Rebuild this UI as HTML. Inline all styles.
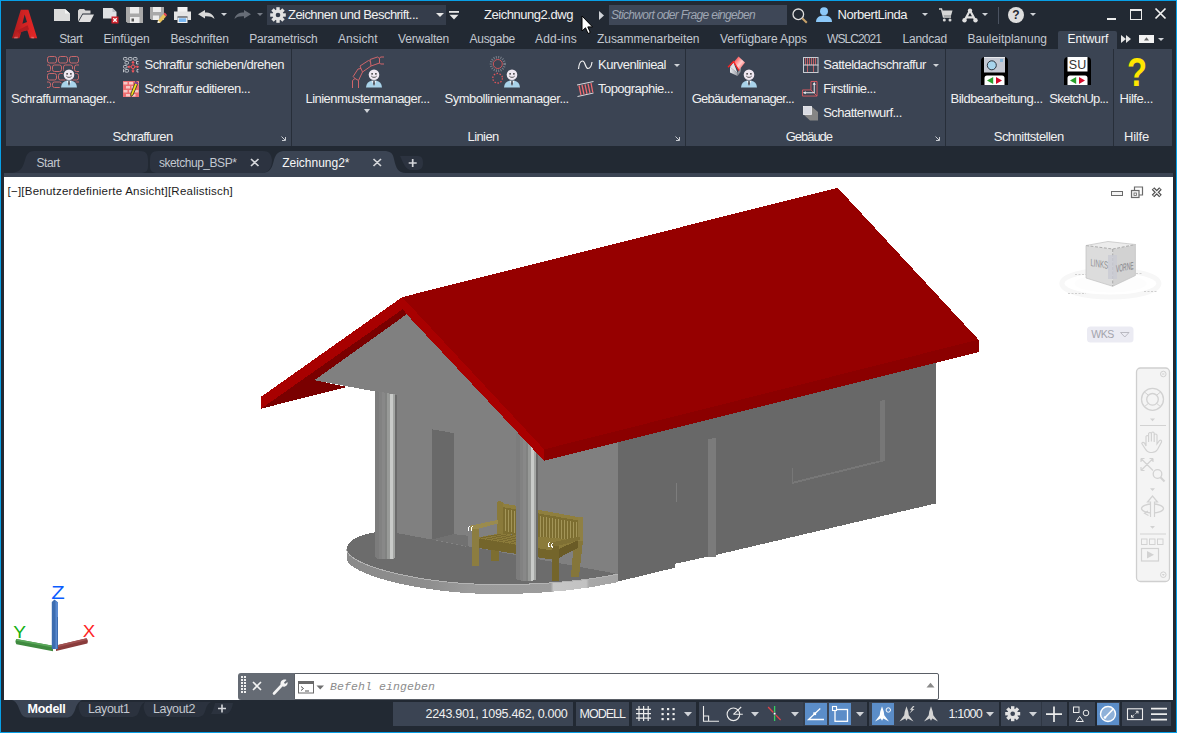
<!DOCTYPE html>
<html lang="de"><head><meta charset="utf-8">
<title>Zeichnung2.dwg</title>
<style>
*{box-sizing:border-box;margin:0;padding:0}
html,body{width:1177px;height:733px;overflow:hidden;background:#222933}
body{position:relative;font-family:"Liberation Sans","DejaVu Sans",sans-serif;color:#f0f0f0;font-size:12.5px}
.a{position:absolute}
svg{position:absolute;overflow:visible}
#frame{position:absolute;left:0;top:0;width:1177px;height:733px;border:1px solid #089fe6;z-index:50}
.t{position:absolute;white-space:nowrap;line-height:normal;z-index:20}
.box{position:absolute;background:#3b4453}
.sep{position:absolute;top:49px;width:1px;height:97px;background:#272e39}
#draw{position:absolute;left:4px;top:177px;width:1169px;height:523px;background:#fff}
.dd{position:absolute;width:0;height:0;border-left:3.5px solid transparent;border-right:3.5px solid transparent;border-top:4px solid #d0d3d8}
.sb{position:absolute;top:702px;height:24px;background:#3b4453}
.sbb{position:absolute;top:703px;height:22px;background:#5b8dc8}
</style></head><body>
<div id="frame"></div>
<!-- ================= TITLE BAR ================= -->
<div id="titlebar">
<!-- A logo -->
<svg style="left:0;top:0" width="50" height="45" viewBox="0 0 50 45">
 <defs><linearGradient id="ag" x1="0" y1="0" x2="1" y2="0"><stop offset="0" stop-color="#a91c1e"/><stop offset=".45" stop-color="#cf2222"/><stop offset="1" stop-color="#e62626"/></linearGradient>
 <linearGradient id="ag2" x1="0" y1="0" x2="0" y2="1"><stop offset="0" stop-color="#c82222" stop-opacity="0"/><stop offset=".75" stop-color="#d84040" stop-opacity=".2"/><stop offset="1" stop-color="#f59a9a" stop-opacity=".95"/></linearGradient></defs>
 <path d="M20.800 9.700H28.400L37.200 38.200H29.800L27.300 30.200L21.300 31.800L19.400 38.200H12ZM24.600 14.400L22.400 23.700L27 22Z" fill="url(#ag)" fill-rule="evenodd"/>
 <path d="M16.500 31L27.600 25.200L29 29.600L21.300 31.800L20.500 34.500Z" fill="#b01c20"/>
 <path d="M14 38.200L16.500 30L19.500 31L17.500 38.200Z" fill="url(#ag2)"/>
 <path d="M31.500 38.200L29 30.500L31.500 30L34.200 38.200Z" fill="url(#ag2)"/>
</svg>
<!-- new -->
<svg style="left:54px;top:9px" width="16" height="12" viewBox="0 0 16 12"><path d="M0 0H11L16 4.5V12H0Z" fill="#dcdcdc"/><path d="M11 0V4.5H16Z" fill="#f4f4f4"/></svg>
<!-- open -->
<svg style="left:78px;top:9px" width="16" height="13" viewBox="0 0 16 13"><path d="M0 12.5V1.5L1.5 0H6L7.5 1.5H12.5V4.5H4.5Z" fill="#d6d6d6"/><path d="M4.8 5.5H16L12.2 13H0.6Z" fill="#e0e0e0"/></svg>
<!-- doc with x -->
<svg style="left:102px;top:7px" width="17" height="17" viewBox="0 0 17 17"><path d="M1 1H10.5L14.5 5V11.5H1Z" fill="#dfe1e4"/><path d="M10.5 1V5H14.5Z" fill="#b9bdc4"/><rect x="9.5" y="9.5" width="7" height="7" fill="#d0202a"/><path d="M11.3 11.3L14.7 14.7M14.7 11.3L11.3 14.7" stroke="#fff" stroke-width="1.3"/></svg>
<!-- save -->
<svg style="left:126px;top:7px" width="17" height="16" viewBox="0 0 17 16"><path d="M0 0H17V16H1.5L0 14.5Z" fill="#a9a9a9"/><rect x="4" y="0" width="9" height="6.5" fill="#ececec"/><rect x="4" y="10" width="9.5" height="6" fill="#ececec"/><rect x="5.5" y="11.5" width="2.5" height="3" fill="#555"/></svg>
<!-- save as -->
<svg style="left:150px;top:7px" width="17" height="16" viewBox="0 0 17 16"><path d="M0 0H14V13H1.5L0 11.500Z" fill="#a9a9a9"/><rect x="3" y="0" width="8" height="5" fill="#ececec"/><rect x="3" y="8.5" width="6" height="4.500" fill="#ececec"/><path d="M8 13.5L13.500 7L16 9.500L10.500 15.500L7.500 16Z" fill="#e9c35a"/><path d="M13.500 7L14.800 5.600L17 8L16 9.500Z" fill="#ee4b55"/><path d="M7.500 16L8 13.500L10.500 15.500Z" fill="#f5f5f5"/></svg>
<!-- print -->
<svg style="left:174px;top:7px" width="17" height="16" viewBox="0 0 17 16"><rect x="3.5" y="0" width="10" height="5" fill="#f2f2f2"/><path d="M0 4.500H17V13H13.500V9.500H3.500V13H0Z" fill="#e4e4e4"/><rect x="3.500" y="10.500" width="10" height="5.500" fill="#f2f2f2"/><rect x="4.800" y="11.300" width="7.400" height="3.700" fill="#79b7f2"/></svg>
<!-- undo -->
<svg style="left:198px;top:10px" width="17" height="9" viewBox="0 0 17 9"><path d="M0 4.200L7 0V2.600C12 2.600 15.500 4.500 16.500 9C14.200 6.600 11.500 6 7 6.200V8.600Z" fill="#d9d9d9"/></svg>
<div class="dd" style="left:221px;top:13px;border-left-width:3px;border-right-width:3px;border-top-width:3.5px"></div>
<!-- redo -->
<svg style="left:233.500px;top:10px" width="17" height="9" viewBox="0 0 17 9"><path d="M17 4.200L10 0V2.600C5 2.600 1.500 4.500 0.500 9C2.800 6.600 5.500 6 10 6.200V8.600Z" fill="#666c76"/></svg>
<div class="dd" style="left:257px;top:13px;border-left-width:3px;border-right-width:3px;border-top-width:3.5px;border-top-color:#767c86"></div>
<!-- workspace box -->
<div class="a" style="left:267px;top:5px;width:179px;height:20px;background:#353d4b"></div>
<svg style="left:270px;top:7px" width="16" height="16" viewBox="-8 -8 16 16"><g fill="#e2e2e2"><circle r="5.400"/><g id="gt"><rect x="-1.700" y="-7.800" width="3.400" height="15.600"/></g><use href="#gt" transform="rotate(45)"/><use href="#gt" transform="rotate(90)"/><use href="#gt" transform="rotate(135)"/></g><circle r="2.300" fill="#353d4b"/></svg>
<div class="dd" style="left:436px;top:12.500px;border-left-width:4px;border-right-width:4px;border-top-width:4.500px;border-top-color:#e6e6e6"></div>
<!-- customize qat -->
<svg style="left:449px;top:10.500px" width="10" height="9" viewBox="0 0 10 9"><rect x="0" y="0" width="10" height="1.800" fill="#e6e6e6"/><path d="M0.500 3.800H9.500L5 8.500Z" fill="#e6e6e6"/></svg>
<!-- mouse cursor -->
<svg style="left:580.500px;top:14.500px;z-index:30" width="13" height="20" viewBox="0 0 13 20"><path d="M1 1V16L4.500 12.800L7 18.500L9.300 17.500L6.800 11.900H11.500Z" fill="#fff" stroke="#000" stroke-width="1"/></svg>
<!-- small triangle -->
<svg style="left:598.500px;top:10.500px" width="5" height="9" viewBox="0 0 5 9"><path d="M0 0L5 4.500L0 9Z" fill="#d0d3d8"/></svg>
<!-- search box -->
<div class="a" style="left:609px;top:5px;width:178px;height:20px;background:#3e4757"></div>
<svg style="left:792px;top:7.500px" width="16" height="16" viewBox="0 0 16 16"><circle cx="6.300" cy="6.300" r="5.300" fill="none" stroke="#e0e0e0" stroke-width="1.300"/><path d="M10.200 10.200L14.800 14.800" stroke="#c9a26a" stroke-width="2"/></svg>
<!-- user -->
<svg style="left:816px;top:7px" width="16" height="15" viewBox="0 0 16 15"><circle cx="8" cy="4.200" r="4" fill="#8cc8f8"/><path d="M0 15C0 10.500 3.500 8.500 8 8.500S16 10.500 16 15Z" fill="#8cc8f8"/></svg>
<div class="dd" style="left:921.500px;top:13px;border-left-width:3px;border-right-width:3px;border-top-width:3.500px"></div>
<!-- cart -->
<svg style="left:939px;top:8px" width="14" height="14" viewBox="0 0 14 14"><path d="M0 1H2.500L4.500 9H12" fill="none" stroke="#d6d6d6" stroke-width="1.400"/><path d="M3 2.500H13.500L12 7.800H4.300Z" fill="#d6d6d6"/><circle cx="5.300" cy="12" r="1.500" fill="#d6d6d6"/><circle cx="11" cy="12" r="1.500" fill="#d6d6d6"/></svg>
<!-- A app -->
<svg style="left:962px;top:7.500px" width="16" height="15" viewBox="0 0 16 15"><path d="M8 2.500L2.500 12.500M8 2.500L13.500 12.500M4.300 9.300H11.700" fill="none" stroke="#e0e0e0" stroke-width="2.200"/><circle cx="8" cy="2.600" r="2.200" fill="#e0e0e0"/><circle cx="2.500" cy="12.300" r="2.200" fill="#e0e0e0"/><circle cx="13.500" cy="12.300" r="2.200" fill="#e0e0e0"/></svg>
<div class="dd" style="left:982px;top:13px;border-left-width:3px;border-right-width:3px;border-top-width:3.500px"></div>
<div class="a" style="left:998px;top:7px;width:1px;height:17px;background:#4a5260"></div>
<!-- help -->
<svg style="left:1008px;top:7px" width="16" height="16" viewBox="0 0 16 16"><circle cx="8" cy="8" r="8" fill="#dedede"/><text x="8" y="12.300" font-size="12" font-weight="bold" text-anchor="middle" fill="#222933" font-family="Liberation Sans,sans-serif">?</text></svg>
<div class="dd" style="left:1030px;top:13px;border-left-width:3px;border-right-width:3px;border-top-width:3.500px"></div>
<!-- window controls -->
<div class="a" style="left:1107px;top:17.500px;width:8.500px;height:2.300px;background:#ececec"></div>
<div class="a" style="left:1130px;top:9px;width:12px;height:11px;border:1.300px solid #ececec;border-top-width:2px"></div>
<svg style="left:1155px;top:8px" width="11" height="11" viewBox="0 0 11 11"><path d="M0.500 0.500L10.500 10.500M10.500 0.500L0.500 10.500" stroke="#f2f2f2" stroke-width="1.700"/></svg>
</div>

<!-- ================= MENU ================= -->
<div id="menu">
<div class="a" style="left:1058px;top:31px;width:59px;height:19px;background:#3b4453;border-radius:2px 2px 0 0"></div>
<svg style="left:1120.500px;top:35px" width="10" height="8" viewBox="0 0 10 8"><path d="M0 0L5 4L0 8ZM5 0L10 4L5 8Z" fill="#e6e6e6"/></svg>
<div class="a" style="left:1139px;top:35px;width:15px;height:8px;background:#f2f2f2"></div>
<svg style="left:1144px;top:37px" width="5" height="4" viewBox="0 0 5 4"><path d="M0 3.500L2.500 0.300L5 3.500Z" fill="#666"/></svg>
<div class="dd" style="left:1158px;top:38px;border-left-width:3px;border-right-width:3px;border-top-width:3.500px"></div>
</div>

<!-- ================= RIBBON ================= -->
<div class="box" id="ribbon" style="left:6px;top:49px;width:1166px;height:97px"></div>
<div class="sep" style="left:291px"></div>
<div class="sep" style="left:685px"></div>
<div class="sep" style="left:945px"></div>
<div class="sep" style="left:1113px"></div>
<svg width="0" height="0" style="left:0;top:0"><defs>
 <g id="mgr">
  <path d="M0 18C0.300 14 2.500 11.800 5.500 11.300H10.500C13.500 11.800 15.700 14 16 18Z" fill="#a9d3ea"/>
  <path d="M5.600 11.200H10.400L8 16.500Z" fill="#f4f4f6"/>
  <path d="M7.300 11.500H8.700L9 14.500L8 16.500L7 14.500Z" fill="#4a4f5a"/>
  <circle cx="8" cy="5.300" r="5.300" fill="#efe8f2"/>
  <circle cx="6.100" cy="4.300" r="0.900" fill="#333"/><circle cx="9.900" cy="4.300" r="0.900" fill="#333"/>
  <path d="M5.300 6.600C6.500 8.300 9.500 8.300 10.700 6.600" fill="none" stroke="#333" stroke-width="0.800"/>
 </g>
 <path id="ca" d="M0 0H5V5ZM1 1.200L3.800 4V1.200Z" fill-rule="evenodd"/>
</defs></svg>

<!-- Schraffurmanager -->
<svg style="left:47px;top:56px" width="32" height="32" viewBox="0 0 32 32">
 <g fill="none" stroke="#c8676b" stroke-width="1">
  <rect x="0.500" y="0.500" width="9" height="6.500" rx="2"/><rect x="11.500" y="0.500" width="9" height="6.500" rx="2"/><rect x="22.500" y="0.500" width="9" height="6.500" rx="2"/>
  <path d="M0 9H1.500Q3.500 9 3.500 11V13.500Q3.500 15.500 1.500 15.500H0"/><rect x="5.500" y="9" width="9" height="6.500" rx="2"/><rect x="16.500" y="9" width="9" height="6.500" rx="2"/><path d="M32 9H29.500Q27.500 9 27.500 11V13.500Q27.500 15.500 29.500 15.500H32"/>
  <rect x="0.500" y="17.500" width="9" height="6.500" rx="2"/><rect x="11.500" y="17.500" width="9" height="6.500" rx="2"/><rect x="22.500" y="17.500" width="9" height="6.500" rx="2"/>
  <path d="M0 26H1.500Q3.500 26 3.500 28V29.500Q3.500 31.500 1.500 31.500H0"/><rect x="5.500" y="26" width="9" height="5.500" rx="2"/><path d="M32 26H29.500Q27.500 26 27.500 28"/>
 </g>
 <circle cx="22" cy="18.300" r="6.300" fill="#3b4453"/><path d="M13 32C13.500 27 16 25 19.500 24.500H24.500C28 25 30.500 27 31 32Z" fill="#3b4453"/>
 <use href="#mgr" x="14" y="13.500"/>
</svg>
<!-- schieben/drehen -->
<svg style="left:123px;top:57px" width="16" height="16" viewBox="0 0 16 16">
 <g fill="none" stroke="#c9cdd4" stroke-width="0.900">
  <rect x="0.500" y="0.500" width="3.500" height="2.600" rx="0.800"/><rect x="5.500" y="0.500" width="3.500" height="2.600" rx="0.800"/><rect x="10.500" y="0.500" width="3.500" height="2.600" rx="0.800"/>
  <rect x="2" y="4.500" width="3.500" height="2.600" rx="0.800"/><path d="M15.500 4.500H13.500V7H15.500"/>
  <rect x="0.500" y="8.500" width="3.500" height="2.600" rx="0.800"/>
  <rect x="2" y="12.500" width="3.500" height="2.600" rx="0.800"/><path d="M0 12.500H0.500V15H0M15.500 12.500H14V15H15.500"/>
 </g>
 <g stroke="#f0555a" stroke-width="1" fill="none"><path d="M10 4.500V15M5 9.800H15.500"/><circle cx="10" cy="9.800" r="1.800" fill="#3b4453"/></g>
 <g fill="#f0555a"><path d="M10 3.500L8.300 6H11.700ZM10 16L8.300 13.600H11.700ZM4.300 9.800L6.500 8.200V11.400ZM16 9.800L13.800 8.200V11.400Z"/></g>
</svg>
<!-- editieren -->
<svg style="left:123px;top:81px" width="16" height="16" viewBox="0 0 16 16">
 <rect width="16" height="16" fill="#ef6f72"/>
 <g fill="#f6c9c6"><rect x="0.500" y="1" width="4" height="2.500"/><rect x="6" y="1" width="4" height="2.500"/><rect x="11.500" y="1" width="4" height="2.500"/><rect x="3" y="5" width="4" height="2.500"/><rect x="8.500" y="5" width="4" height="2.500"/><rect x="0.500" y="9" width="4" height="2.500"/><rect x="6" y="9" width="4" height="2.500"/><rect x="11.500" y="9" width="4" height="2.500"/><rect x="3" y="13" width="4" height="2.500"/><rect x="8.500" y="13" width="4" height="2.500"/></g>
 <path d="M12.500 0.500L15 2L10 14L8 15.500L7.800 13Z" fill="#f4e11a" stroke="#2c2c2c" stroke-width="0.800"/><path d="M12.500 0.500L15 2L14.300 3.600L11.800 2.200Z" fill="#8b2bb0"/>
</svg>
<!-- corner arrows -->
<svg style="left:281px;top:135.500px" width="5" height="5" viewBox="0 0 5 5"><path d="M0.500 0.500L4 4M4.500 1V4.500H1" fill="none" stroke="#c9ccd2" stroke-width="1"/></svg>
<svg style="left:675px;top:135.500px" width="5" height="5" viewBox="0 0 5 5"><path d="M0.500 0.500L4 4M4.500 1V4.500H1" fill="none" stroke="#c9ccd2" stroke-width="1"/></svg>
<svg style="left:934.500px;top:135.500px" width="5" height="5" viewBox="0 0 5 5"><path d="M0.500 0.500L4 4M4.500 1V4.500H1" fill="none" stroke="#c9ccd2" stroke-width="1"/></svg>

<!-- Linienmustermanager -->
<svg style="left:352px;top:56px" width="32" height="32" viewBox="0 0 32 32">
 <g fill="none" stroke="#d0656a" stroke-width="1">
  <path d="M0.500 32V24.500L3 22.500L6.500 24.500V32"/>
  <path d="M3 22.500L1.200 20.500L6 13L9 12.500L10.500 16L6.500 24.500"/>
  <path d="M9 12.500L8 10L16.500 4.500L18.500 5.500L19 10L10.500 16"/>
  <path d="M18.500 5.500L18 3.500L25.500 1L27.500 2.500L27.500 7L19 10"/>
  <path d="M32 1H28.500L27.500 2.500V7L28.500 8H32"/>
 </g>
 <use href="#mgr" x="14" y="13.500"/>
</svg>
<div class="dd" style="left:364px;top:108.500px;border-left-width:3.500px;border-right-width:3.500px;border-top-width:4px"></div>
<!-- Symbollinienmanager -->
<svg style="left:490px;top:56px" width="32" height="32" viewBox="0 0 32 32">
 <circle cx="7.800" cy="8" r="6.800" fill="none" stroke="#8e939c" stroke-width="2.600" stroke-dasharray="1 1.300" opacity=".75"/>
 <circle cx="7.800" cy="8" r="4.500" fill="none" stroke="#d0555a" stroke-width="1"/>
 <circle cx="7.600" cy="22.200" r="4.800" fill="none" stroke="#e0555a" stroke-width="1.300" stroke-dasharray="1.500 1.500"/>
 <use href="#mgr" x="14" y="13.500"/>
</svg>
<!-- Kurvenlinieal -->
<svg style="left:578px;top:60px" width="15" height="10" viewBox="0 0 15 10"><path d="M0.500 9C1 4 2.500 1 4.500 1C7.500 1 7 8.500 10 8.500C12 8.500 13.500 6 14 2" fill="none" stroke="#f0f0f0" stroke-width="1.200"/></svg>
<div class="dd" style="left:673.500px;top:63.500px;border-left-width:3px;border-right-width:3px;border-top-width:3.500px"></div>
<!-- Topographie -->
<svg style="left:577px;top:81px" width="17" height="16" viewBox="0 0 17 16">
 <path d="M0 4L16.500 0.500M0.500 15.500L16.500 12" stroke="#d8dadf" stroke-width="1"/>
 <g stroke="#ef6a6e" stroke-width="1.300"><path d="M2 4.500L4 14M5 4L7 13.500M8 3.300L10 12.800M11 2.600L13 12M14 2L15.800 11.500"/></g>
</svg>

<!-- Gebäudemanager -->
<svg style="left:726px;top:56px" width="32" height="32" viewBox="0 0 32 32">
 <defs><linearGradient id="rg" x1="0" y1="0" x2="1" y2="1"><stop offset="0" stop-color="#ff1a1a"/><stop offset=".55" stop-color="#ffd0d0"/><stop offset="1" stop-color="#ff2a2a"/></linearGradient>
 <linearGradient id="wg" x1="0" y1="0" x2="1" y2="0"><stop offset="0" stop-color="#e8eaee"/><stop offset="1" stop-color="#9da1a9"/></linearGradient></defs>
 <path d="M4 11L11.500 17V20L4 16.500Z" fill="url(#wg)"/>
 <path d="M11.500 17L15.500 9L14.500 16L11.500 20Z" fill="#8f939b"/>
 <path d="M4 11L7.500 6.500L11.500 17Z" fill="#dfe1e6"/>
 <path d="M7.500 6.500L12.500 0.500L19 6.500L13 14Z" fill="url(#rg)"/>
 <path d="M2 11.300L7.500 5.500L13 14.500" fill="none" stroke="#ff2020" stroke-width="1.300"/>
 <use href="#mgr" x="15" y="13.500"/>
</svg>
<!-- Satteldach -->
<svg style="left:803px;top:57px" width="16" height="16" viewBox="0 0 16 16">
 <g stroke="#d0656a" stroke-width="0.900"><path d="M2.500 0.500V8M4.500 0.500V8M6.500 0.500V8M8.500 0.500V8M10.500 0.500V8M12.500 0.500V8M4.500 8V15.500M10.500 8V15.500"/></g>
 <path d="M0.500 8H15.500" stroke="#d8dadf" stroke-width="1"/>
 <rect x="0.500" y="0.500" width="14.500" height="15" fill="none" stroke="#c9ccd2" stroke-width="1"/>
</svg>
<div class="dd" style="left:933px;top:63.500px;border-left-width:3px;border-right-width:3px;border-top-width:3.500px"></div>
<!-- Firstlinie -->
<svg style="left:802px;top:81px" width="16" height="16" viewBox="0 0 17 17">
 <path d="M9.500 0.500H16V16H0.500V9.500H9.500ZM16 16L9.500 9.500" fill="none" stroke="#d95a60" stroke-width="1"/>
 <path d="M13 2V12.500H2" fill="none" stroke="#e8eaee" stroke-width="1.100"/>
 <path d="M13 1L11.300 4H14.700ZM1 12.500L4 10.800V14.200Z" fill="#e8eaee"/>
</svg>
<!-- Schattenwurf -->
<svg style="left:803px;top:106px" width="16" height="15" viewBox="0 0 16 15">
 <path d="M8.500 0.500L15 6V14.500H7L0.500 8.500Z" fill="#858585"/>
 <rect x="0.500" y="0.500" width="8" height="8" fill="#d8dae2" stroke="#f3f3f6" stroke-width="0.800"/>
</svg>

<!-- Bildbearbeitung -->
<svg style="left:981px;top:56.500px" width="27" height="28" viewBox="0 0 27 28">
 <path d="M0 28V4Q0 0 4 0H23Q27 0 27 4V28Z" fill="#000"/>
 <rect x="3" y="0" width="21" height="15.500" fill="#c5c9d3"/>
 <rect x="3" y="0" width="21" height="1" fill="#e8eaee"/>
 <circle cx="10.800" cy="8.300" r="4.500" fill="#a8d4ec" stroke="#1d232c" stroke-width="0.900"/>
 <rect x="19" y="2" width="3" height="3" fill="#86b6d8"/>
 <path d="M3.500 28V21Q3.500 18.500 6 18.500H21Q23.500 18.500 23.500 21V28Z" fill="#fff"/>
 <path d="M6 23.500L12.200 20V27Z" fill="#2aa02a"/><path d="M21 23.500L15 20V27Z" fill="#d40a2a"/>
</svg>
<!-- SketchUp -->
<svg style="left:1064px;top:56.500px" width="27" height="28" viewBox="0 0 27 28">
 <path d="M0 28V4Q0 0 4 0H23Q27 0 27 4V28Z" fill="#000"/>
 <rect x="3.500" y="0" width="20" height="14.500" fill="#fff"/>
 <text x="13.500" y="12" font-size="12.500" text-anchor="middle" fill="#333" font-family="Liberation Sans,sans-serif">SU</text>
 <path d="M3.500 28V21Q3.500 18.500 6 18.500H21Q23.500 18.500 23.500 21V28Z" fill="#fff"/>
 <path d="M6 23.500L12.200 20V27Z" fill="#2aa02a"/><path d="M21 23.500L15 20V27Z" fill="#d40a2a"/>
</svg>
<!-- Hilfe ? -->
<svg style="left:1126px;top:55px" width="22" height="34" viewBox="0 0 22 34"><text x="11" y="31" font-size="40" font-weight="bold" text-anchor="middle" fill="#ffe600" font-family="Liberation Sans,sans-serif" textLength="20" lengthAdjust="spacingAndGlyphs">?</text></svg>


<!-- ================= FILE TABS ================= -->
<div id="filetabs">
<div class="box" style="left:4px;top:173px;width:1169px;height:4px"></div>
<svg style="left:0;top:0" width="1177" height="180" viewBox="0 0 1177 180">
 <path d="M6 173C20 173 22 170 25 160C27 152 30 151 36 151H140C146 151 148 154 148 160V166C148 171 146 173 140 173Z" fill="#2c3340"/>
 <path d="M150 160C150 154 152 151 158 151H263C269 151 271 154 272 160C272 168 268 173 262 173H158C152 173 150 171 150 166Z" fill="#2c3340"/>
 <path d="M262 173C270 173 272 168 274 160C276 153 279 151 285 151H384C390 151 393 153 394 159C396 168 398 173 406 173Z" fill="#3b4453"/>
 <path d="M400 156H418C422 156 423 159 423 163C423 168 421 170 416 170H412C405 170 403 162 400 156Z" fill="#2c3340"/>
 <path d="M251 159L258.500 166M258.500 159L251 166M373.500 159L381 166M381 159L373.500 166" stroke="#d4d6da" stroke-width="1.700"/>
 <path d="M412.700 159V167M408.700 163H416.700" stroke="#d4d6da" stroke-width="1.700"/>
</svg>
</div>

<!-- ================= DRAWING ================= -->
<div id="draw"></div>

<!-- ================= COMMAND LINE ================= -->
<div id="cmd">
<div class="a" style="left:238px;top:673px;width:58px;height:27px;background:#656b74;border-radius:3px 0 0 3px"></div>
<div class="a" style="left:294px;top:673px;width:645px;height:27px;background:#fff;border:1px solid #5a5f66;border-radius:0 2px 2px 0"></div>
<svg style="left:241px;top:676px" width="6" height="19" viewBox="0 0 6 19"><g fill="#f0f0f0"><rect x="0" y="0" width="2" height="2"/><rect x="3" y="0" width="2" height="2"/><rect x="0" y="3" width="2" height="2"/><rect x="3" y="3" width="2" height="2"/><rect x="0" y="6" width="2" height="2"/><rect x="3" y="6" width="2" height="2"/><rect x="0" y="9" width="2" height="2"/><rect x="3" y="9" width="2" height="2"/><rect x="0" y="12" width="2" height="2"/><rect x="3" y="12" width="2" height="2"/><rect x="0" y="15" width="2" height="2"/><rect x="3" y="15" width="2" height="2"/></g></svg>
<svg style="left:252px;top:680.500px" width="10" height="10" viewBox="0 0 10 10"><path d="M1 1L9 9M9 1L1 9" stroke="#f2f2f2" stroke-width="1.600"/></svg>
<svg style="left:272px;top:678px" width="17" height="17" viewBox="0 0 17 17"><path d="M2 15.500L9.500 7.500" stroke="#f4f4f4" stroke-width="2.600" stroke-linecap="round"/><path d="M9 3.500C10.500 1.500 13 1.200 14.500 2L12 4.500L13 6L15.500 4C16 6 15 8 13 8.500C11.500 9 10 8.500 9 7.500C8.300 6.500 8.300 4.500 9 3.500Z" fill="#f4f4f4"/></svg>
<svg style="left:298px;top:680.500px" width="28" height="13" viewBox="0 0 28 13"><rect x="0.500" y="0.500" width="15" height="11.500" fill="#fff" stroke="#6a6a6a"/><rect x="0.500" y="0.500" width="15" height="2.500" fill="#6a6a6a"/><path d="M3 5.500L5.500 7.500L3 9.500" fill="none" stroke="#555" stroke-width="1"/><path d="M7 10H11" stroke="#555" stroke-width="1"/><path d="M18.500 4.500H26L22.200 8.500Z" fill="#707070"/></svg>
<svg style="left:926px;top:682px" width="9" height="6" viewBox="0 0 9 6"><path d="M0.500 5.500L4.500 0.800L8.500 5.500Z" fill="#8a8a8a"/></svg>
</div>

<!-- ================= LAYOUT TABS ================= -->
<svg style="left:0;top:700px" width="240" height="20" viewBox="0 700 240 20">
 <path d="M12 700C17 702 18 706 20 711C22 716 24 717.500 29 717.500H66C71 717.500 73 715 75 710C76.500 705 78 702 82 700Z" fill="#3b4453"/>
 <path d="M80 702C78.500 705 78 707 79.500 711C81 716 83 717 87 717H131C136 717 138 715 139.500 710C140.500 706 142 703.500 145 702Z" fill="#2b323e"/>
 <path d="M145 702C143.500 705 143 707 144.500 711C146 716 148 717 152 717H197C202 717 204 715 205.500 710C206.500 706 208 703.500 211 702Z" fill="#2b323e"/>
 <path d="M215 703H233C232 709 230 714 225 714H211C213 711 214 707 215 703Z" fill="#2b323e"/>
 <path d="M222 704.500V712.500M218 708.500H226" stroke="#d4d6da" stroke-width="1.600"/>
</svg>

<!-- ================= STATUS BAR ================= -->
<div id="status">
<div class="sb" style="left:393px;width:180px"></div>
<div class="sb" style="left:576px;width:53px"></div>
<div class="sb" style="left:632px;width:64px"></div>
<div class="sb" style="left:699px;width:168px"></div>
<div class="sb" style="left:869px;width:130px"></div>
<div class="sb" style="left:1001px;width:40px"></div>
<div class="sb" style="left:1042px;width:25px"></div>
<div class="sb" style="left:1069px;width:26px"></div>
<div class="sb" style="left:1097px;width:23px"></div>
<div class="sb" style="left:1122px;width:49px"></div>
<div class="sbb" style="left:805px;width:22px"></div>
<div class="sbb" style="left:829px;width:22px"></div>
<div class="sbb" style="left:872px;width:22px"></div>
<div class="sbb" style="left:1097px;width:22px"></div>
<svg id="sticons" style="left:0;top:700px;z-index:5" width="1177" height="33" viewBox="0 700 1177 33">
 <defs>
  <path id="sdd" d="M0 0H8L4 4.500Z"/>
  <path id="anno" d="M7.500 0L9.300 5.500L9.800 9L14.500 15.300L8.800 12.300L7.500 14.500L6.200 12.300L0.500 15.300L5.200 9L5.700 5.500Z"/>
 </defs>
 <g stroke="#ececec" stroke-width="1.200" fill="none">
  <!-- grid -->
  <path d="M639 706V721M643.600 706V721M648.200 706V721M636 709.300H651M636 713.700H651M636 718.100H651"/>
  <!-- ortho -->
  <path d="M703.500 706V721.200H719M703.500 716H708.600V721" stroke-width="1.100"/>
  <!-- polar -->
  <circle cx="733.400" cy="714.300" r="6.300" stroke-width="1.100"/><path d="M733.400 714.300H742.800M733.400 714.300L741.200 707" stroke-width="1.100"/>
  <!-- osnap track (blue1) -->
  <path d="M824 719.500H808.500L820.300 708.500" stroke="#fff" stroke-width="1.300"/>
  <!-- osnap (blue2) -->
  <rect x="835" y="709.500" width="12.500" height="11.800" stroke="#fff" stroke-width="1.300"/>
  <!-- plus -->
  <path d="M1054 706.500V722M1046 714.200H1062" stroke-width="1.700"/>
  <!-- shapes -->
  <rect x="1073.500" y="707" width="5.500" height="5.500" stroke-width="1"/><circle cx="1086" cy="713" r="2.800" stroke-width="1"/><path d="M1079.700 716.300L1083.400 721.500H1076Z" stroke-width="1"/>
  <!-- fullscreen -->
  <rect x="1127.500" y="708.800" width="15" height="10.800" stroke-width="1.100"/>
  <path d="M1138 711.300L1135.500 713.800M1135.800 711.300H1138V713.500M1131.500 717.200L1134 714.700M1133.700 717.200H1131.500V715" stroke-width="1"/>
  <!-- hamburger -->
  <path d="M1151 708.600H1167M1151 714.100H1167M1151 719.600H1167" stroke-width="1.900"/>
 </g>
 <g fill="#ececec">
  <!-- dots -->
  <rect x="661.500" y="708" width="2.200" height="2.200"/><rect x="667" y="708" width="2.200" height="2.200"/><rect x="672.500" y="708" width="2.200" height="2.200"/>
  <rect x="661.500" y="713" width="2.200" height="2.200"/><rect x="667" y="713" width="2.200" height="2.200"/><rect x="672.500" y="713" width="2.200" height="2.200"/>
  <rect x="661.500" y="718" width="2.200" height="2.200"/><rect x="667" y="718" width="2.200" height="2.200"/><rect x="672.500" y="718" width="2.200" height="2.200"/>
 </g>
 <g fill="#d0d3d8">
  <use href="#sdd" x="684" y="712"/><use href="#sdd" x="751" y="712"/><use href="#sdd" x="791" y="712"/><use href="#sdd" x="856" y="712"/><use href="#sdd" x="986" y="712"/><use href="#sdd" x="1029" y="712"/>
 </g>
 <!-- isodraft -->
 <path d="M774.600 706V721" stroke="#35d060" stroke-width="1.300"/><path d="M768.100 707L780.600 720" stroke="#e0454a" stroke-width="1.200"/><rect x="773.300" y="712.300" width="2.600" height="2.600" fill="#fff" stroke="#3b4453" stroke-width="0.600"/>
 <rect x="813.300" y="712.300" width="2.800" height="2.800" fill="#fff"/>
 <rect x="832.500" y="706.500" width="4" height="4" fill="#5b8dc8" stroke="#fff" stroke-width="1.100"/>
 <rect x="803.500" y="702" width="1" height="24" fill="#2f3743"/><rect x="1041" y="702" width="1" height="24" fill="#2f3743"/>
 <!-- anno icons -->
 <use href="#anno" x="874.500" y="706.300" fill="#fff"/><circle cx="888.300" cy="710" r="2.200" fill="none" stroke="#fff" stroke-width="1"/>
 <use href="#anno" x="899" y="706.300" fill="#d4d4d4"/><path d="M913 706L909.800 709.800H911.800L909.500 713.500L914.500 709H912.300L914.500 706Z" fill="#d4d4d4"/>
 <use href="#anno" x="923.500" y="706.300" fill="#d4d4d4"/>
 <!-- gear -->
 <g transform="translate(1012.700 713.700)" fill="#e2e2e2"><circle r="5.200"/><rect x="-1.700" y="-7.500" width="3.400" height="15"/><rect x="-1.700" y="-7.500" width="3.400" height="15" transform="rotate(45)"/><rect x="-1.700" y="-7.500" width="3.400" height="15" transform="rotate(90)"/><rect x="-1.700" y="-7.500" width="3.400" height="15" transform="rotate(135)"/><circle r="2.300" fill="#3b4453"/></g>
 <!-- isolate circle -->
 <circle cx="1108" cy="714" r="7.500" fill="#8fb1d9" stroke="#fff" stroke-width="1.400"/><path d="M1104.800 717.800L1113 709.200" stroke="#fff" stroke-width="1.600"/><circle cx="1105" cy="717.500" r="1.300" fill="#fff"/>
</svg>

</div>
<!-- ================= 3D MODEL ================= -->
<svg id="model" style="left:0;top:0;z-index:2" width="1177" height="733" viewBox="0 0 1177 733" shape-rendering="crispEdges">
 <defs>
  <linearGradient id="colg" x1="0" y1="0" x2="1" y2="0"><stop offset="0.000" stop-color="#7c7c7c"/><stop offset="0.167" stop-color="#7c7c7c"/><stop offset="0.167" stop-color="#828282"/><stop offset="0.319" stop-color="#828282"/><stop offset="0.319" stop-color="#888888"/><stop offset="0.444" stop-color="#888888"/><stop offset="0.444" stop-color="#818281"/><stop offset="0.551" stop-color="#818281"/><stop offset="0.551" stop-color="#989a98"/><stop offset="0.685" stop-color="#989a98"/><stop offset="0.685" stop-color="#c9cbc9"/><stop offset="0.833" stop-color="#c9cbc9"/><stop offset="0.833" stop-color="#a4a6a4"/><stop offset="0.921" stop-color="#a4a6a4"/><stop offset="0.921" stop-color="#6a6a6a"/><stop offset="1.000" stop-color="#6a6a6a"/></linearGradient>
  <linearGradient id="rimg" gradientUnits="userSpaceOnUse" x1="346" y1="0" x2="619" y2="0">
   <stop offset="0" stop-color="#8a8a8a"/><stop offset=".30" stop-color="#8e8e8e"/><stop offset=".45" stop-color="#9a9a9a"/>
   <stop offset=".75" stop-color="#9c9c9c"/><stop offset=".76" stop-color="#c6c6c6"/><stop offset=".88" stop-color="#c2c2c2"/>
   <stop offset=".89" stop-color="#a8a8a8"/><stop offset="1" stop-color="#a4a4a4"/>
  </linearGradient>
 </defs>
 <!-- front (porch) wall -->
 <path d="M406.600 314.300L314.400 380.200L396 395.400V533.100L618.200 574.300V420L500 380Z" fill="#808080"/>
 <!-- door -->
 <path d="M431.500 429.300L454 433.100V534.500L431.500 539.600Z" fill="#696969"/>
 <!-- long wall -->
 <path d="M618 420L935.700 340V503.500L715.600 555V557.200H708V556.600L675 563.800V567.700L618 581.500Z" fill="#686868"/>
 <path d="M708 439.500L715.600 437.700V557.200H708Z" fill="#7b7b7b"/>
 <rect x="676" y="483" width="1" height="18.600" fill="#7d7d7d"/>
 <path d="M879.600 401L884.700 399.800V461.200L791.600 484V468H792.600V481.800L879.600 460.500Z" fill="#777777"/>
 <!-- porch floor -->
 <path d="M397 533.100L375 532.300C358 535 346.600 541 346.600 549.300C346.600 565 420 584.600 499 584.600C540 584.600 585 581 618.100 574Z" fill="#6c6c6c"/>
 <path d="M431.500 539.600L453.800 534.100L468 535.800V546.400Z" fill="#717171"/>
 <path d="M436 540.600L466 546.200" stroke="#8a8a8a" stroke-width="0.800" stroke-dasharray="2 3" fill="none"/>
 <path d="M346.600 549.300C346.600 565 420 584.600 499 584.600C540 584.600 585 581 618.100 574V582C585 590 540 594 499 594.200C420 594 346.600 574 346.600 558.300Z" fill="url(#rimg)"/>
 <path d="M346.600 549.300C346.600 565 420 584.600 499 584.600C540 584.600 585 581 618.100 574" fill="none" stroke="#b4b4b4" stroke-width="1"/>
  <g id="bench">
  <!-- back legs -->
  <path d="M491.300 550H498.800V560.900H491.300Z" fill="#7d6e30"/>
  <path d="M574 540L583 540L579 576.600H571Z" fill="#85763a"/>
  <!-- back panel -->
  <path d="M502 505L579 519V541L502 533.500Z" fill="#7c6d30"/>
  <g stroke="#a39558" stroke-width="1.100"><path d="M505.500 509V531M508.500 509.500V531.500M511.500 510V532M514.500 510.500V532.500M540.500 516V537M543.500 516.500V537.500M546.500 517V538M549.500 517.500V538.500M552.500 518V539M555.500 518.500V539.500M558.500 519V539.500M561.500 519.500V540M564.500 520V540.500M567.500 520.500V541M570.500 521V541M573.500 521.500V541.500M576.500 522V542"/></g>
  <path d="M501 503L581 517.500V521L501 506.800Z" fill="#8f7f3e"/>
  <!-- back posts -->
  <path d="M497.200 503C497.200 500.500 502.500 500.500 503 503V535H497.200Z" fill="#8a7a3a"/>
  <path d="M578 518C578 516 583 516 583.400 518V541H577.500Z" fill="#8f8044"/>
  <!-- seat -->
  <path d="M475.600 538L498.800 533.500L578 540L554.800 551Z" fill="#8b7b3a"/>
  <path d="M475.600 538L554.800 551V560L475.600 547.500Z" fill="#74652b"/>
  <path d="M554.800 551L578 540V548L554.800 560Z" fill="#6a5b26"/>
  <g stroke="#6f6029" stroke-width="0.700"><path d="M480 538.200L501 534.200M486 539.200L507 534.800M492 540.200L513 535.400M498 541.200L519 536M504 542.200L525 536.500M510 543.200L531 537M516 544.200L537 537.500"/></g>
  <!-- arms -->
  <path d="M468.800 526L498.200 519.800V523.500L471 530.500Z" fill="#9a8b4e"/>
  <path d="M549 543L580 536.500V540L552 547.500Z" fill="#7f7034"/>
  <!-- front legs -->
  <path d="M472.200 529H478.600V565.700H472.200Z" fill="#8c7d40"/>
  <path d="M552 546H558.900V581.400H552Z" fill="#74652b"/>
  <!-- white marks -->
  <path d="M469.500 526.500C468 528 468 530 469.500 531.500M472.500 526.500C471 528 471 530 472.500 531.500" fill="none" stroke="#fff" stroke-width="1"/>
  <path d="M549.500 542C548.300 543.500 548.300 545.500 549.500 547.500M552.800 543L551 545L553 548" fill="none" stroke="#fff" stroke-width="1"/>
 </g>

 <!-- columns -->
 <path d="M375.100 391L396.700 394.800V557C396.700 560.300 375.100 560.300 375.100 557Z" fill="url(#colg)"/>
 <path d="M516.200 430H537.800V578.500C537.800 581.800 516.200 581.800 516.200 578.500Z" fill="url(#colg)"/>
 <!-- roof -->
 <path d="M261.200 408.600L403 309L406.600 314.300L314.400 380.200L347.200 387Z" fill="#7a0000"/>
 <path d="M261.200 396.700L402.200 297.100L403 309L261.200 408.600Z" fill="#a80000"/>
 <path d="M402.200 297.100L837.700 187.800L978.500 339.600L544.100 449.400Z" fill="#960000"/>
 <path d="M544.100 449.400L978.500 339.600V352.200L544.100 460.800Z" fill="#8b0000"/>
 <path d="M402.200 297.100L544.100 449.400V460.800L406.600 314.300L403 309Z" fill="#a80000"/>
</svg>
<!-- ================= VIEWPORT OVERLAYS ================= -->
<svg id="ovl" style="left:0;top:0;z-index:3" width="1177" height="733" viewBox="0 0 1177 733">
 <!-- viewport controls -->
 <rect x="1111.500" y="191.500" width="11" height="4" fill="#f4f4f4" stroke="#6a6a6a" stroke-width="1"/>
 <path d="M1134.500 190.500V187H1142.500V195H1139" fill="none" stroke="#6a6a6a" stroke-width="1.200"/>
 <rect x="1131.500" y="190.500" width="7.500" height="7" fill="#f4f4f4" stroke="#6a6a6a" stroke-width="1.200"/>
 <rect x="1134" y="193" width="2.500" height="2.500" fill="none" stroke="#6a6a6a" stroke-width="0.800"/>
 <path d="M1153 188.500L1160.500 196M1160.500 188.500L1153 196" stroke="#4a4a4a" stroke-width="3.600"/>
 <path d="M1153.500 189L1160 195.500M1160 189L1153.500 195.500" stroke="#f4f4f4" stroke-width="1.100"/>

 <!-- ViewCube -->
 <ellipse cx="1110.400" cy="283.500" rx="48.500" ry="13.500" fill="none" stroke="#f7f7f7" stroke-width="5"/>
 <ellipse cx="1110.400" cy="283.500" rx="36" ry="9" fill="#fdfdfd"/>
 <g stroke="#c4c4c4" stroke-width="0.800" fill="none" stroke-dasharray="2 1.500"><path d="M1068 293.500H1086M1075 274.500H1086M1136 273.500H1143M1144 291.500H1157"/></g>
 <path d="M1086 245.500L1112.700 249V286.300L1086 278Z" fill="#dcdcdc"/>
 <path d="M1112.700 249L1135.400 244.500V275.500L1112.700 286.300Z" fill="#d2d2d2"/>
 <path d="M1086 245.500L1108 241.500L1135.400 244.500L1112.700 249Z" fill="#ececec"/>
 <path d="M1086 245.500L1112.700 249L1135.400 244.500M1112.700 249V286.300" fill="none" stroke="#9a9a9a" stroke-width="0.800" stroke-dasharray="3 1.500"/>
 <path d="M1086 245.500V278L1112.700 286.300L1135.400 275.500V244.500L1108 241.500Z" fill="none" stroke="#c0c0c0" stroke-width="0.700"/>
 <rect x="1108" y="255" width="9" height="24" fill="#c9cbd3" opacity=".8"/>
 <text transform="matrix(1 .17 0 1 1090.500 266)" font-size="10.500" fill="#8e8e92" font-family="Liberation Sans,sans-serif" textLength="17.500" lengthAdjust="spacingAndGlyphs">LINKS</text>
 <text transform="matrix(1 -.2 0 1 1116 272.500)" font-size="10.500" fill="#808086" font-family="Liberation Sans,sans-serif" textLength="17.500" lengthAdjust="spacingAndGlyphs">VORNE</text>
 <!-- WKS -->
 <rect x="1087" y="326.500" width="46.500" height="16" rx="3.500" fill="#ebebf3"/>
 <path d="M1120.500 332.500H1129L1124.800 337Z" fill="none" stroke="#b4b4bc" stroke-width="0.900"/>

 <!-- navigation bar -->
 <g fill="none" stroke="#d2d2d2" stroke-width="1">
  <rect x="1136.500" y="368" width="33" height="213.500" rx="4" fill="#f4f4f4" stroke="#cfcfcf" stroke-width="1.300"/>
  <circle cx="1163.300" cy="374" r="2.800"/><path d="M1162 372.700L1164.600 375.300M1164.600 372.700L1162 375.300" stroke-width="0.700"/>
  <circle cx="1152.500" cy="399.300" r="11" stroke-width="1.300"/><circle cx="1152.500" cy="399.300" r="5.800" stroke-width="1.300"/>
  <path d="M1144.500 392L1148.500 395.300M1160.500 392L1156.500 395.300M1144.500 406.600L1148.500 403.300M1160.500 406.600L1156.500 403.300"/>
  <path d="M1150 418.500H1155L1152.500 421.200Z" fill="#d2d2d2" stroke="none"/>
  <path d="M1140 425.500H1166"/>
  <!-- hand -->
  <path d="M1146 446V436.500Q1147.300 434.500 1148.600 436.500V442V433.500Q1150 431.500 1151.400 433.500V441.500V433Q1152.800 431 1154.200 433V442V435Q1155.600 433 1157 435V444L1159.500 440.500Q1162 439.500 1161.500 442L1157.500 449.500Q1155.500 452.500 1152 452.500H1150Q1147 452 1145 448.500L1141.800 443.500Q1142.500 441.500 1144.500 443Z" stroke-width="1.200"/>
  <!-- zoom extents -->
  <path d="M1141 458.500L1153 470.500M1153 458.500L1141 470.500M1141 458.500V462M1141 458.500H1144.500M1153 458.500V462M1153 458.500H1149.500M1141 470.500V467M1141 470.500H1144.500" stroke-width="1.200"/>
  <circle cx="1157.500" cy="474" r="4.300" stroke-width="1.300" fill="#f4f4f4"/><path d="M1160.500 477.300L1164.500 481.500" stroke-width="2"/>
  <path d="M1150 488.300H1155L1152.500 491Z" fill="#d2d2d2" stroke="none"/>
  <!-- orbit -->
  <ellipse cx="1152.500" cy="508.500" rx="11" ry="4.500" stroke-width="1.300"/>
  <path d="M1150.500 517V502H1147.500L1152.500 496L1157.500 502H1154.500V517" fill="#f4f4f4" stroke-width="1.200"/>
  <path d="M1148 511L1144.500 513.200L1148.500 515.500" stroke-width="1.200"/>
  <path d="M1150 526H1155L1152.500 528.700Z" fill="#d2d2d2" stroke="none"/>
  <path d="M1140 534H1166"/>
  <!-- showmotion -->
  <rect x="1141.500" y="539" width="5.500" height="5.500"/><rect x="1149.500" y="539" width="5.500" height="5.500"/><rect x="1157.500" y="539" width="5.500" height="5.500"/>
  <rect x="1141.500" y="548.500" width="17" height="12.500" stroke-width="1.200"/><path d="M1147 551V558.500L1154 554.800Z" fill="#d2d2d2" stroke="none"/>
  <circle cx="1163.300" cy="574.700" r="2.800"/><path d="M1161.800 574H1164.800L1163.300 576Z" fill="#d2d2d2" stroke="none"/>
 </g>

 <!-- UCS icon -->
 <path d="M16.400 639L53 645.800V651.200L16.400 644.200Q14.500 641.500 16.400 639Z" fill="#3f8a3f"/>
 <path d="M16.400 639L53 645.800V647.500L16.400 640.800Z" fill="#5aa85a"/>
 <path d="M56 645.500L86.500 638.300Q88.800 640.800 87.300 643.500L56 651Z" fill="#8a3c3c"/>
 <path d="M56 645.500L86.500 638.300L87 640L56 647.500Z" fill="#a25252"/>
 <path d="M51.800 602L54.500 599.500L58 602.500V649H51.800Z" fill="#3d6db0"/>
 <path d="M55.500 600.500L58 602.500V617H57V649H55.500Z" fill="#5a8ad0"/>
 <text x="51.300" y="599" font-size="17.500" fill="#0a5cff" font-family="Liberation Sans,sans-serif" textLength="13.500" lengthAdjust="spacingAndGlyphs" stroke="#fff" stroke-width="0.550" paint-order="stroke">Z</text>
 <text x="13.300" y="637.800" font-size="16.500" fill="#12b012" font-family="Liberation Sans,sans-serif" textLength="12.800" lengthAdjust="spacingAndGlyphs" stroke="#fff" stroke-width="0.550" paint-order="stroke">Y</text>
 <text x="82.800" y="636.800" font-size="16.500" fill="#ff2424" font-family="Liberation Sans,sans-serif" textLength="12.500" lengthAdjust="spacingAndGlyphs" stroke="#fff" stroke-width="0.550" paint-order="stroke">X</text>
</svg>

<!-- TEXT -->
<span class="t" style="left:288.00px;top:7px;font-size:13px;color:#f0f0f0;letter-spacing:-0.552px;">Zeichnen und Beschrift...</span>
<span class="t" style="left:484.00px;top:7px;font-size:13px;color:#f0f0f0;letter-spacing:-0.458px;">Zeichnung2.dwg</span>
<span class="t" style="left:611.00px;top:8px;font-size:12px;color:#9ea6b3;letter-spacing:-0.693px;font-style:italic">Stichwort oder Frage eingeben</span>
<span class="t" style="left:837.50px;top:7px;font-size:13px;color:#f0f0f0;letter-spacing:-0.471px;">NorbertLinda</span>
<span class="t" style="left:59.20px;top:32px;font-size:12px;color:#c3c8d0;letter-spacing:-0.409px;">Start</span>
<span class="t" style="left:103.50px;top:32px;font-size:12px;color:#c3c8d0;letter-spacing:-0.172px;">Einfügen</span>
<span class="t" style="left:170.50px;top:32px;font-size:12px;color:#c3c8d0;letter-spacing:-0.166px;">Beschriften</span>
<span class="t" style="left:249.30px;top:32px;font-size:12px;color:#c3c8d0;letter-spacing:-0.207px;">Parametrisch</span>
<span class="t" style="left:338.00px;top:32px;font-size:12px;color:#c3c8d0;letter-spacing:0.020px;">Ansicht</span>
<span class="t" style="left:398.00px;top:32px;font-size:12px;color:#c3c8d0;letter-spacing:-0.189px;">Verwalten</span>
<span class="t" style="left:469.50px;top:32px;font-size:12px;color:#c3c8d0;letter-spacing:-0.268px;">Ausgabe</span>
<span class="t" style="left:535.00px;top:32px;font-size:12px;color:#c3c8d0;letter-spacing:0.188px;">Add-ins</span>
<span class="t" style="left:597.00px;top:32px;font-size:12px;color:#c3c8d0;letter-spacing:-0.056px;">Zusammenarbeiten</span>
<span class="t" style="left:720.00px;top:32px;font-size:12px;color:#c3c8d0;letter-spacing:-0.116px;">Verfügbare Apps</span>
<span class="t" style="left:827.00px;top:32px;font-size:12px;color:#c3c8d0;letter-spacing:-0.922px;">WSLC2021</span>
<span class="t" style="left:902.50px;top:32px;font-size:12px;color:#c3c8d0;letter-spacing:-0.221px;">Landcad</span>
<span class="t" style="left:967.50px;top:32px;font-size:12px;color:#c3c8d0;letter-spacing:0.007px;">Bauleitplanung</span>
<span class="t" style="left:1067.50px;top:32px;font-size:12px;color:#f7f7f7;letter-spacing:0.045px;">Entwurf</span>
<span class="t" style="left:11.00px;top:91px;font-size:13px;color:#f0f0f0;letter-spacing:-0.523px;">Schraffurmanager...</span>
<span class="t" style="left:144.50px;top:57px;font-size:13px;color:#f0f0f0;letter-spacing:-0.510px;">Schraffur schieben/drehen</span>
<span class="t" style="left:144.50px;top:81px;font-size:13px;color:#f0f0f0;letter-spacing:-0.515px;">Schraffur editieren...</span>
<span class="t" style="left:112.50px;top:129px;font-size:13px;color:#f0f0f0;letter-spacing:-0.634px;">Schraffuren</span>
<span class="t" style="left:305.50px;top:91px;font-size:13px;color:#f0f0f0;letter-spacing:-0.539px;">Linienmustermanager...</span>
<span class="t" style="left:444.50px;top:91px;font-size:13px;color:#f0f0f0;letter-spacing:-0.495px;">Symbollinienmanager...</span>
<span class="t" style="left:467.50px;top:129px;font-size:13px;color:#f0f0f0;letter-spacing:-0.576px;">Linien</span>
<span class="t" style="left:598.00px;top:57px;font-size:13px;color:#f0f0f0;letter-spacing:-0.495px;">Kurvenlinieal</span>
<span class="t" style="left:598.00px;top:81px;font-size:13px;color:#f0f0f0;letter-spacing:-0.529px;">Topographie...</span>
<span class="t" style="left:691.75px;top:91px;font-size:13px;color:#f0f0f0;letter-spacing:-0.760px;">Gebäudemanager...</span>
<span class="t" style="left:823.25px;top:57px;font-size:13px;color:#f0f0f0;letter-spacing:-0.488px;">Satteldachschraffur</span>
<span class="t" style="left:823.25px;top:81px;font-size:13px;color:#f0f0f0;letter-spacing:-0.518px;">Firstlinie...</span>
<span class="t" style="left:823.25px;top:105px;font-size:13px;color:#f0f0f0;letter-spacing:-0.548px;">Schattenwurf...</span>
<span class="t" style="left:785.75px;top:129px;font-size:13px;color:#f0f0f0;letter-spacing:-1.036px;">Gebäude</span>
<span class="t" style="left:950.50px;top:91px;font-size:13px;color:#f0f0f0;letter-spacing:-0.510px;">Bildbearbeitung...</span>
<span class="t" style="left:1049.30px;top:91px;font-size:13px;color:#f0f0f0;letter-spacing:-0.773px;">SketchUp...</span>
<span class="t" style="left:993.75px;top:129px;font-size:13px;color:#f0f0f0;letter-spacing:-0.523px;">Schnittstellen</span>
<span class="t" style="left:1119.50px;top:91px;font-size:13px;color:#f0f0f0;letter-spacing:-0.443px;">Hilfe...</span>
<span class="t" style="left:1124.00px;top:129px;font-size:13px;color:#f0f0f0;letter-spacing:-0.203px;">Hilfe</span>
<span class="t" style="left:36.40px;top:156px;font-size:12px;color:#c3c8d0;letter-spacing:-0.389px;">Start</span>
<span class="t" style="left:159.00px;top:156px;font-size:12px;color:#c3c8d0;letter-spacing:-0.461px;">sketchup_BSP*</span>
<span class="t" style="left:282.20px;top:156px;font-size:12px;color:#f7f7f7;letter-spacing:-0.008px;">Zeichnung2*</span>
<span class="t" style="left:7.50px;top:185px;font-size:11.5px;color:#1c1c1c;letter-spacing:0.236px;">[−][Benutzerdefinierte Ansicht][Realistisch]</span>
<span class="t" style="left:330.00px;top:680px;font-size:11.5px;color:#8c8c8c;letter-spacing:0.098px;font-family:'Liberation Mono',monospace;font-style:italic">Befehl eingeben</span>
<span class="t" style="left:27.50px;top:702px;font-size:12.5px;color:#ffffff;letter-spacing:-0.266px;font-weight:bold">Modell</span>
<span class="t" style="left:88.00px;top:702px;font-size:12.5px;color:#c3c8d0;letter-spacing:-0.426px;">Layout1</span>
<span class="t" style="left:153.00px;top:702px;font-size:12.5px;color:#c3c8d0;letter-spacing:-0.355px;">Layout2</span>
<span class="t" style="left:425.50px;top:707px;font-size:12.5px;color:#f0f0f0;letter-spacing:-0.298px;">2243.901, 1095.462, 0.000</span>
<span class="t" style="left:579.50px;top:707px;font-size:12.5px;color:#f0f0f0;letter-spacing:-0.984px;">MODELL</span>
<span class="t" style="left:948.50px;top:707px;font-size:12.5px;color:#f0f0f0;letter-spacing:-0.831px;">1:1000</span>
<span class="t" style="left:1091.30px;top:328px;font-size:10.5px;color:#a4a4ac;letter-spacing:-0.474px;">WKS</span>
</body></html>
